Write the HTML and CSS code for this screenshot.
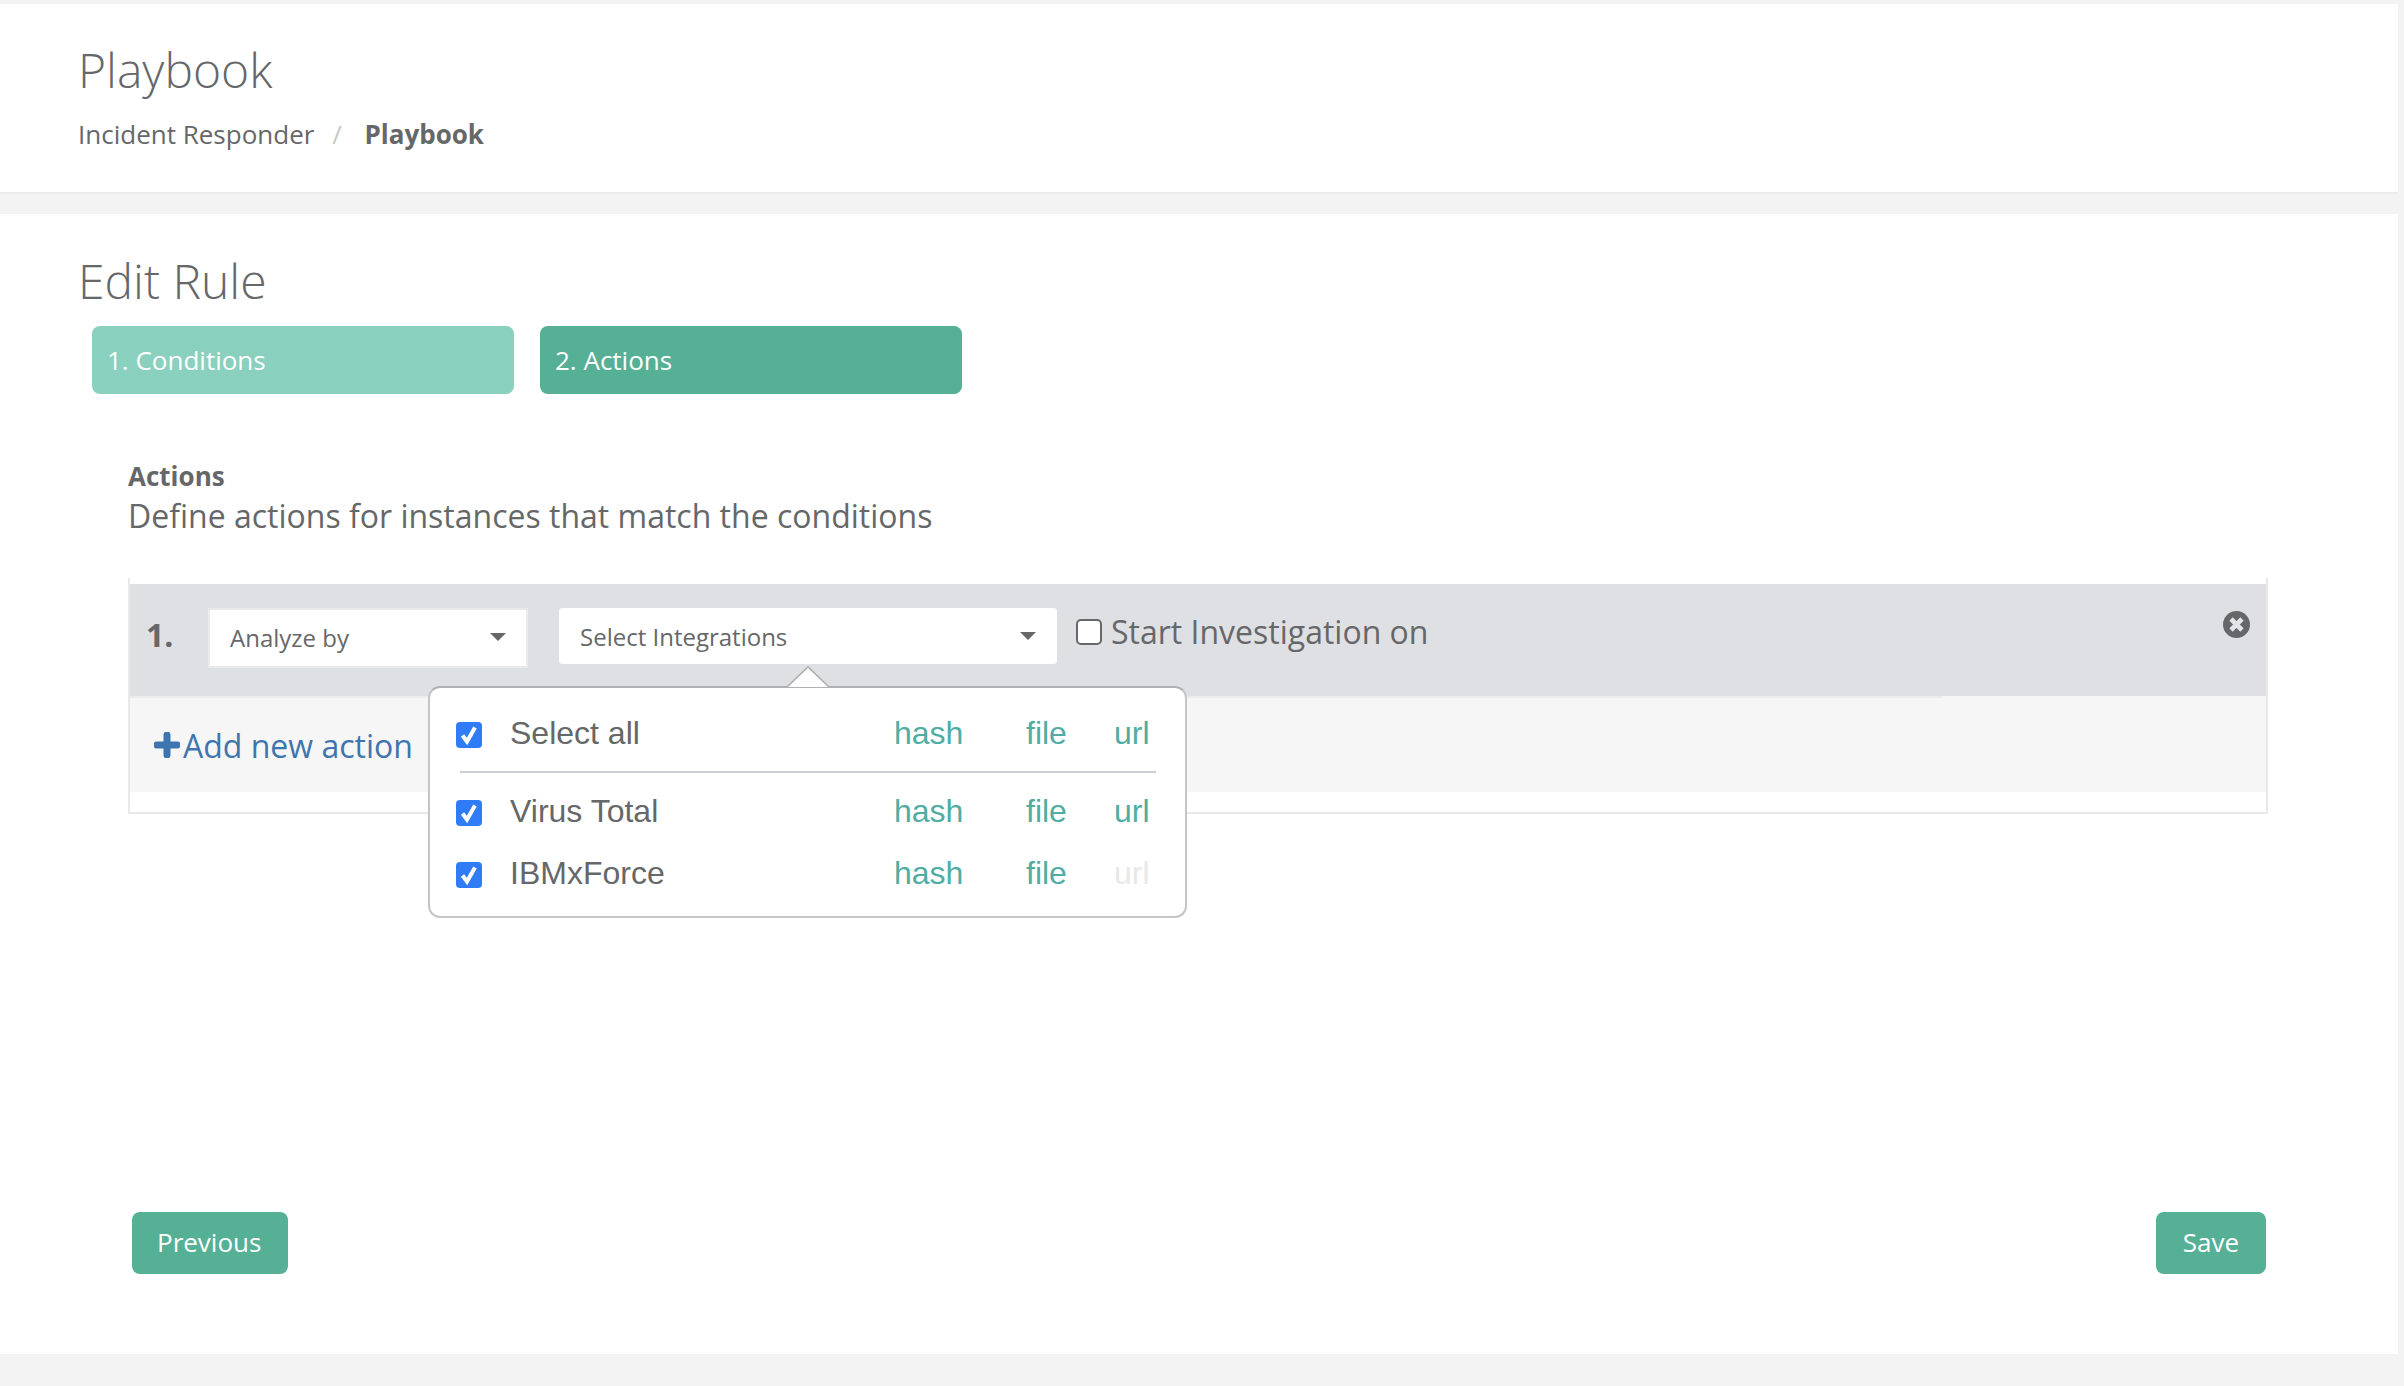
FILE: index.html
```html
<!DOCTYPE html>
<html lang="en">
<head>
    <meta charset="UTF-8">
    <title>Playbook</title>
    <link rel="stylesheet" href="styles.css">
</head>
<body>
    <div class="page">
        <header class="page-header">
            <h1>Playbook</h1>
            <div class="breadcrumb">
                <span>Incident Responder</span>
                <span class="sep">/</span>
                <b>Playbook</b>
            </div>
        </header>

        <main class="rule-card">
            <h2>Edit Rule</h2>
            <div class="steps">
                <div class="step step-done">1. Conditions</div>
                <div class="step step-active">2. Actions</div>
            </div>

            <div class="actions-head">
                <b>Actions</b>
                <p>Define actions for instances that match the conditions</p>
            </div>

            <div class="action-box">
                <div class="action-row">
                    <span class="num">1.</span>
                    <div class="select select-type">Analyze by<i class="caret"></i></div>
                    <div class="select select-int">Select Integrations<i class="caret"></i></div>
                    <label class="start">
                        <span class="box"></span>
                        Start Investigation on
                    </label>
                    <svg class="close" viewBox="0 0 27 27">
                        <circle cx="13.5" cy="13.5" r="13.5" fill="#666769"/>
                        <path d="M8 8l11 11M19 8L8 19" stroke="#e4e5e8" stroke-width="4.6"/>
                    </svg>

                    <div class="popover">
                        <svg class="arrow" viewBox="0 0 42 22">
                            <path d="M0 21L21 1l21 20" fill="#fff" stroke="#a9aaac" stroke-width="1.5"/>
                        </svg>
                        <div class="pop-row pop-all">
                            <span class="check"><svg viewBox="0 0 26 26"><path d="M6.5 13.5l4.5 6L19 5.5" fill="none" stroke="#fff" stroke-width="4"/></svg></span>
                            <span class="pop-name">Select all</span>
                            <a class="t-hash">hash</a><a class="t-file">file</a><a class="t-url">url</a>
                        </div>
                        <div class="pop-divider"></div>
                        <div class="pop-row">
                            <span class="check"><svg viewBox="0 0 26 26"><path d="M6.5 13.5l4.5 6L19 5.5" fill="none" stroke="#fff" stroke-width="4"/></svg></span>
                            <span class="pop-name">Virus Total</span>
                            <a class="t-hash">hash</a><a class="t-file">file</a><a class="t-url">url</a>
                        </div>
                        <div class="pop-row">
                            <span class="check"><svg viewBox="0 0 26 26"><path d="M6.5 13.5l4.5 6L19 5.5" fill="none" stroke="#fff" stroke-width="4"/></svg></span>
                            <span class="pop-name">IBMxForce</span>
                            <a class="t-hash">hash</a><a class="t-file">file</a><a class="t-url off">url</a>
                        </div>
                    </div>
                </div>
                <div class="row-edge"><i></i></div>
                <div class="add-row">
                    <svg class="plus" viewBox="0 0 26 26"><path d="M13 3v20M3 13h20" stroke="#3e75ae" stroke-width="7" stroke-linecap="round"/></svg>
                    <a>Add new action</a>
                </div>
            </div>

            <div class="footer">
                <button type="button" class="btn-prev">Previous</button>
                <button type="button" class="btn-save">Save</button>
            </div>
        </main>
    </div>
</body>
</html>
```

FILE: styles.css
```css
html, body {
    margin: 0;
    height: 100%;
}
body {
    background-color: #f3f3f3;
    font-family: "Open Sans", sans-serif;
    color: #666769;
    overflow: hidden;
}
.page {
    padding: 4px 6px 0 0;
}
.page-header {
    box-sizing: border-box;
    height: 190px;
    margin-bottom: 20px;
    padding: 38px 0 0 78px;
    background-color: #fff;
    border-bottom: 2px solid #ececec;
}
h1, h2 {
    margin: 0;
    font-size: 48px;
    font-weight: 300;
    line-height: 56px;
}
.breadcrumb {
    margin-top: 18px;
    font-size: 26px;
    line-height: 36px;
}
.breadcrumb .sep {
    margin: 0 16px 0 11px;
    color: #c8c8c8;
}
.rule-card {
    box-sizing: border-box;
    display: flex;
    flex-direction: column;
    height: 1140px;
    padding: 39px 130px 80px 78px;
    background-color: #fff;
}
.steps {
    display: flex;
    gap: 26px;
    margin: 17px 0 0 14px;
}
.step {
    box-sizing: border-box;
    width: 422px;
    height: 68px;
    padding-left: 15px;
    border-radius: 8px;
    color: #fff;
    font-size: 26px;
    line-height: 68px;
}
.step-done {
    background-color: #89d0be;
}
.step-active {
    background-color: #55b096;
}
.actions-head {
    margin: 64px 0 0 50px;
}
.actions-head b {
    display: block;
    font-size: 26px;
    line-height: 36px;
}
.actions-head p {
    margin: 0;
    font-size: 32px;
    line-height: 44px;
}
.action-box {
    box-sizing: border-box;
    height: 236px;
    margin: 40px 0 0 50px;
    padding-top: 6px;
    border: 2px solid #e8e8e8;
    border-top: none;
}
.action-row {
    position: relative;
    box-sizing: border-box;
    display: flex;
    align-items: flex-start;
    height: 112px;
    padding: 24px 0 0 16px;
    background-color: #dfe0e4;
}
.row-edge {
    height: 2px;
    background-color: #f6f6f6;
}
.row-edge i {
    display: block;
    width: 1812px;
    height: 2px;
    background-color: #ebecee;
}
.num {
    width: 62px;
    font-size: 32px;
    font-weight: 700;
    line-height: 54px;
}
.select {
    box-sizing: border-box;
    display: flex;
    align-items: center;
    justify-content: space-between;
    background-color: #fff;
    font-size: 24px;
}
.select-type {
    width: 320px;
    height: 60px;
    padding: 0 20px 2px;
    border: 2px solid #eaeaea;
}
.select-int {
    width: 498px;
    height: 56px;
    margin-left: 31px;
    padding: 0 21px;
    border-radius: 4px;
}
.caret {
    border-left: 8px solid transparent;
    border-right: 8px solid transparent;
    border-top: 8px solid #666769;
}
.start {
    display: flex;
    align-items: center;
    gap: 9px;
    margin-left: 19px;
    font-size: 32px;
    line-height: 48px;
}
.box {
    box-sizing: border-box;
    width: 26px;
    height: 26px;
    background-color: #fff;
    border: 2px solid #666769;
    border-radius: 5px;
}
.close {
    position: absolute;
    top: 27px;
    right: 16px;
    width: 27px;
    height: 27px;
}
.popover {
    position: absolute;
    top: 102px;
    left: 298px;
    z-index: 2;
    box-sizing: border-box;
    width: 759px;
    height: 232px;
    padding: 1px 24px 0 26px;
    background-color: #fff;
    border: 2px solid #c4c5c7;
    border-top-color: #b0b1b3;
    border-radius: 12px;
    font-family: "Liberation Sans", Arial, sans-serif;
    font-size: 32px;
}
.arrow {
    position: absolute;
    top: -22px;
    left: 357px;
    width: 42px;
    height: 22px;
}
.pop-row {
    display: grid;
    grid-template-columns: 54px 384px 132px 88px auto;
    align-items: center;
    height: 62px;
}
.pop-all {
    box-sizing: border-box;
    height: 82px;
    padding-top: 6px;
}
.pop-divider {
    height: 2px;
    margin: 0 5px 7px 4px;
    background-color: #ccd0d4;
}
.check {
    display: block;
    width: 26px;
    height: 26px;
    margin-top: 4px;
    background-color: #2f7cf6;
    border-radius: 4px;
}
.check svg {
    display: block;
}
.pop-row a {
    color: #4fada3;
}
.pop-row a.off {
    color: #e8e8e8;
}
.add-row {
    display: flex;
    align-items: center;
    gap: 3px;
    height: 94px;
    padding-left: 24px;
    background-color: #f6f6f6;
    color: #3e75ae;
    font-size: 32px;
}
.plus {
    width: 26px;
    height: 26px;
}
.footer {
    display: flex;
    justify-content: space-between;
    margin: auto 2px 0 54px;
}
button {
    height: 62px;
    padding: 0 26px 2px;
    background-color: #55b096;
    border: none;
    border-radius: 8px;
    color: #fff;
    font-family: inherit;
    font-size: 26px;
}
.btn-prev {
    padding: 0 27px 2px 25px;
}
.btn-save {
    padding: 0 27px 2px;
}
```
